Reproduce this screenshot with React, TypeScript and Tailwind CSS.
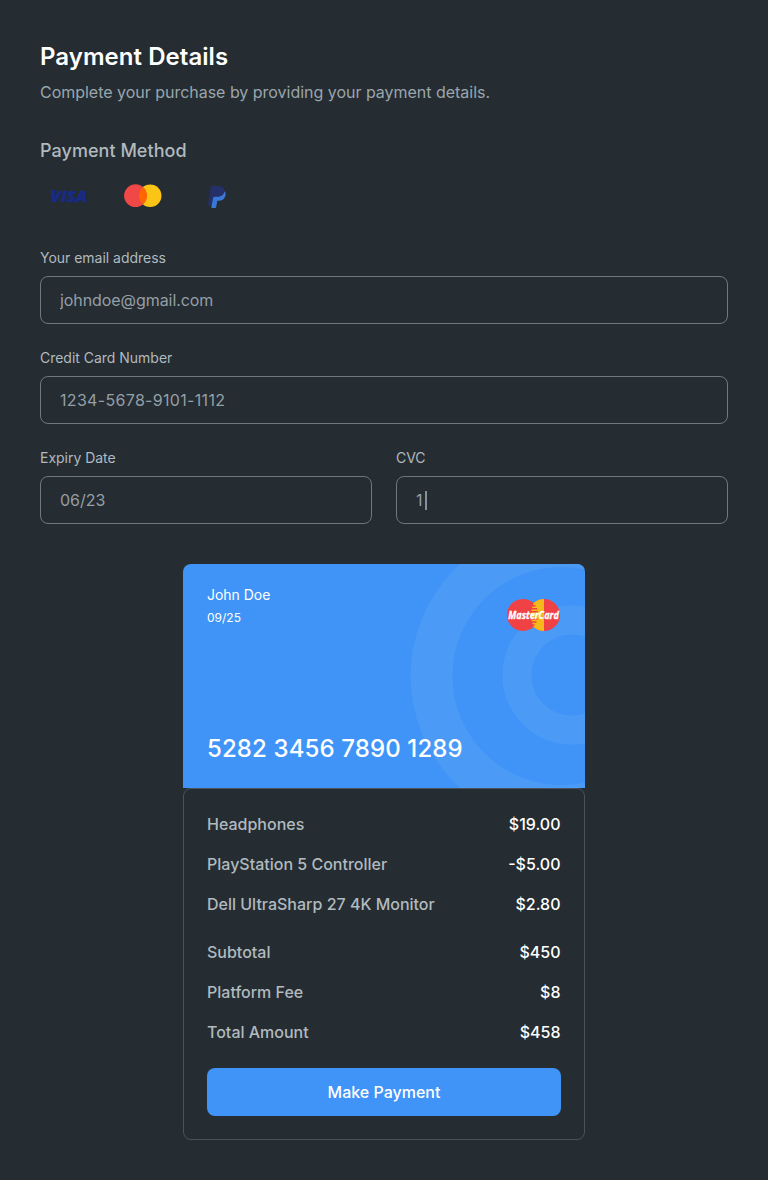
import React, { useState } from "react";

const items = [
  ["Headphones", "$19.00"],
  ["PlayStation 5 Controller", "-$5.00"],
  ["Dell UltraSharp 27 4K Monitor", "$2.80"],
];
const totals = [
  ["Subtotal", "$450"],
  ["Platform Fee", "$8"],
  ["Total Amount", "$458"],
];

function Field({
  label,
  initial,
  spacing = "",
  caret = false,
}: {
  label: string;
  initial: string;
  spacing?: string;
  caret?: boolean;
}) {
  const [value, setValue] = useState(initial);
  return (
    <label className="flex min-w-0 flex-1 flex-col gap-2">
      <span className="text-sm leading-5 tracking-[-0.02px] text-[#b0babf]">{label}</span>
      <span className="flex h-12 items-center rounded-lg border border-[#6e7880] px-[19px]">
        <input
          value={value}
          onChange={(e) => setValue(e.target.value)}
          className={`bg-transparent text-base text-[#949fa6] outline-none ${caret ? "w-2" : "w-full"} ${spacing}`}
        />
        {caret && <span className="ml-px h-[19px] w-[1.5px] bg-[#84919a]" />}
      </span>
    </label>
  );
}

function Row({ name, price }: { name: string; price: string }) {
  return (
    <div className="flex h-6 items-center justify-between text-base font-medium">
      <span className="text-[#b0babf]">{name}</span>
      <span className="pr-[0.5px] text-white">{price}</span>
    </div>
  );
}

function Visa() {
  return (
    <svg width="41" height="14" viewBox="0 0 41 14" className="overflow-visible">
      <path d="M1 .9h5l1.200 3.300C5.600 2.600 3.500 1.600 1 1.200z" fill="#172b85" />
      <text
        x="1.500"
        y="13"
        textLength="37"
        lengthAdjust="spacingAndGlyphs"
        fill="#172b85"
        stroke="#172b85"
        strokeWidth=".5"
        fontFamily="Open Sans, sans-serif"
        fontSize="16.500"
        fontWeight="800"
        fontStyle="italic"
      >
        VISA
      </text>
    </svg>
  );
}

function Mastercard() {
  return (
    <svg width="38" height="24" viewBox="0 0 38 24">
      <circle cx="26.200" cy="11.700" r="11.300" fill="#fcc516" />
      <circle cx="11.500" cy="11.700" r="11.400" fill="#f04747" />
      <path d="M19 3.100a11.400 11.400 0 0 1 0 17.200 11.400 11.400 0 0 1 0-17.200z" fill="#ff6500" />
    </svg>
  );
}

function Paypal() {
  return (
    <svg width="18" height="22" viewBox="0 0 18 22">
      <path d="M3.700 0h7.200c4 0 5.900 2.100 5.200 5.700-.8 4-3.500 5.900-7.700 5.900H6.200L4.800 19.200H1.200c-.7 0-1.100-.5-1-1.100L2.700.9c.1-.6.400-.9 1-.9z" fill="#253069" />
      <path d="M16.400 5.200c1.200 1 1.500 2.500 1.100 4.300-.8 3.600-3.300 5.200-6.800 5.200H9.300l-1.100 6.400c-.1.600-.5.900-1.100.9H4c-.6 0-.8-.4-.7-.9l1.900-9.400c.1-.7.500-1 1.200-1h2.700c4.100-.1 6.600-1.500 7.300-5.500z" fill="#3978d6" />
    </svg>
  );
}

function MastercardClassic() {
  return (
    <svg width="54" height="32" viewBox="0 0 54 32" className="overflow-visible">
      <circle cx="37" cy="16" r="16" fill="#f04245" />
      <path d="M37 0a16 16 0 0 0 0 32z" fill="#f6b91a" />
      <path d="M16 0a16 16 0 0 1 10.500 4l-3.500 12 3.500 12A16 16 0 1 1 16 0z" fill="#f04245" />
      <path d="M22 6.700h6.500M22 9.700h8.200M22 12.700h8.800M22 20h8.700M22 23h7.500M22 26h5.500" stroke="#f04245" strokeWidth="1.500" />
      <text
        x="1.300"
        y="20"
        textLength="50.500"
        lengthAdjust="spacingAndGlyphs"
        fill="#fff"
        stroke="#fff"
        strokeWidth=".3"
        fontFamily="Open Sans, sans-serif"
        fontSize="11"
        fontWeight="700"
        fontStyle="italic"
      >
        MasterCard
      </text>
    </svg>
  );
}

export default function App() {
  return (
    <main className="flex h-[1180px] w-full flex-col bg-[#252c32] px-10 pt-[41px] font-['Inter',sans-serif]">
      <h1 className="text-2xl leading-8 font-semibold tracking-[0.05px] text-white">Payment Details</h1>
      <p className="mt-[7px] text-base leading-6 tracking-[-0.02px] text-[#9aa6ac]">
        Complete your purchase by providing your payment details.
      </p>

      <h2 className="mt-[33px] text-lg leading-7 font-medium tracking-[0.04px] text-[#b0babf]">Payment Method</h2>
      <div className="mt-[11px] flex h-10 items-center">
        <div className="flex w-[84px] pl-[9px]"><Visa /></div>
        <div className="flex w-[84px]"><Mastercard /></div>
        <div className="flex pt-px"><Paypal /></div>
      </div>

      <form className="mt-8 flex flex-col gap-6">
        <Field label="Your email address" initial="johndoe@gmail.com" spacing="tracking-[-0.07px]" />
        <Field label="Credit Card Number" initial="1234-5678-9101-1112" spacing="tracking-[0.32px]" />
        <div className="flex gap-6">
          <Field label="Expiry Date" initial="06/23" />
          <Field label="CVC" initial="1" caret />
        </div>
      </form>

      <section className="mx-auto mt-10 w-[402px]">
        <div className="relative h-56 overflow-hidden rounded-t-lg bg-[#4094f7] text-white">
          <svg className="absolute inset-0" width="402" height="224" fill="none" stroke="#4a9af6">
            <circle cx="378.500" cy="112" r="130" strokeWidth="42" />
            <circle cx="389" cy="111" r="55" strokeWidth="29" />
          </svg>
          <div className="relative flex h-full flex-col justify-between p-6 pb-[23px]">
            <div className="flex justify-between">
              <div>
                <p className="-mt-0.5 text-sm leading-[18px] tracking-[-0.03px]">John Doe</p>
                <p className="mt-1.5 text-xs leading-4">09/25</p>
              </div>
              <div className="mt-[11px]"><MastercardClassic /></div>
            </div>
            <p className="text-2xl leading-8 font-[450] tracking-[0.12px]">5282 3456 7890 1289</p>
          </div>
        </div>
        <div className="h-[352px] rounded-lg border border-[#48535b] px-[23px] pt-[23px]">
          <div className="flex flex-col gap-4">
            {items.map(([n, p]) => <Row key={n} name={n} price={p} />)}
          </div>
          <div className="mt-6 flex flex-col gap-4">
            {totals.map(([n, p]) => <Row key={n} name={n} price={p} />)}
          </div>
          <button className="mt-6 h-12 w-full rounded-lg bg-[#4094f7] text-base font-medium text-white">Make Payment</button>
        </div>
      </section>
    </main>
  );
}
